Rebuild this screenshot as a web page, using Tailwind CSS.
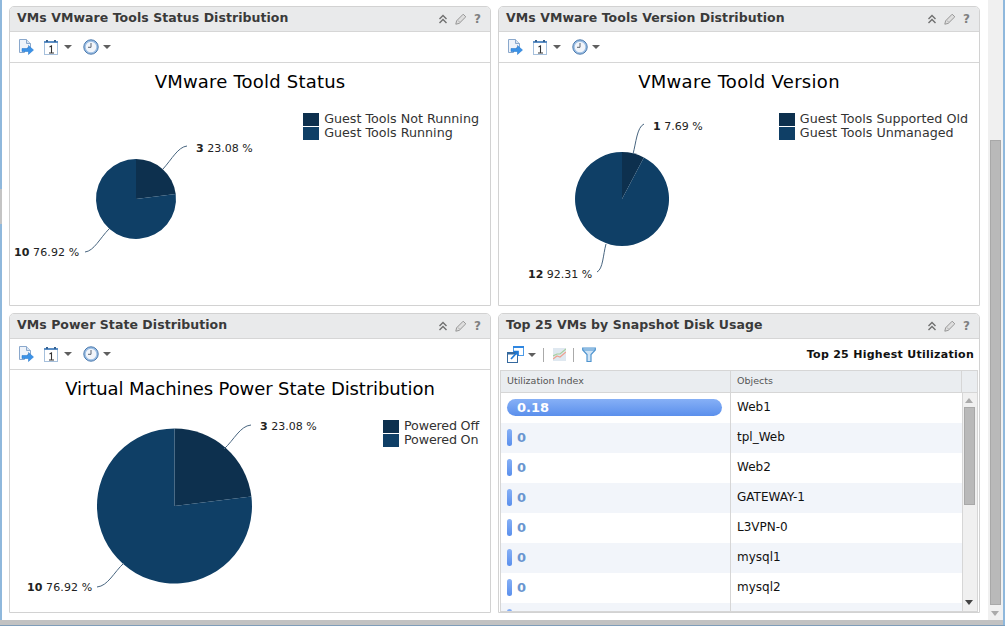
<!doctype html>
<html>
<head>
<meta charset="utf-8">
<title>VM dashboard</title>
<script src="https://cdn.jsdelivr.net/npm/@tailwindcss/browser@4"></script>
</head>
<body class="w-[1005px] h-[626px] overflow-hidden bg-white font-['DejaVu_Sans',sans-serif]">
<!-- shared icons -->
<svg class="hidden">
  <symbol id="i-export" viewBox="0 0 16 16">
    <path d="M1.500.5h7l4 4v4h-3v2h-3v3h-5z" fill="#eef3fa" stroke="#8aa8cc"/>
    <path d="M8.500.5v4h4" fill="#d5e2f0" stroke="#8aa8cc"/>
    <path d="M4 9.500h6.500v-3l5 4.500-5 4.500v-3h-6.500z" fill="#3a92e8" stroke="#1f72c8" stroke-width=".5"/>
  </symbol>
  <symbol id="i-cal" viewBox="0 0 15 15">
    <rect x=".5" y="1.500" width="13" height="13" fill="#fff" stroke="#a6c0dc"/>
    <rect x="0" y="1" width="14" height="2" fill="#5c8fc6"/>
    <rect x="2" y="0" width="2" height="2" fill="#35618f"/>
    <rect x="10" y="0" width="2" height="2" fill="#35618f"/>
    <path d="M5.500 7l2-1v7M5 13h5" fill="none" stroke="#333" stroke-width="1.100"/>
  </symbol>
  <symbol id="i-clock" viewBox="0 0 16 16">
    <circle cx="8" cy="8" r="7.200" fill="#9dbfe4" stroke="#4a79ad" stroke-width="1"/>
    <circle cx="8" cy="8" r="5.300" fill="#f2f5fa"/>
    <path d="M8 4v4.300h-3" fill="none" stroke="#5c6470" stroke-width="1"/>
  </symbol>
  <symbol id="i-caret" viewBox="0 0 8 4"><path d="M0 0h8l-4 4z" fill="#5f5f5f"/></symbol>
  <symbol id="i-up" viewBox="0 0 10 10">
    <path d="M1.500 5l3.500-3.500 3.500 3.500M1.500 9l3.500-3.500 3.500 3.500" fill="none" stroke="#6f6f6f" stroke-width="1.400"/>
  </symbol>
  <symbol id="i-pen" viewBox="0 0 12 12">
    <path d="M.8 11.200l.8-3.400 6.600-6.600 2.600 2.600-6.600 6.600z" fill="#dedede" stroke="#969696"/>
    <path d="M3 7.500l2 2" fill="none" stroke="#adadad"/>
  </symbol>
</svg>

<!-- window edges -->
<div class="absolute left-0 top-0 w-[2px] h-[626px] bg-[#8fb8dc]"></div>
<div class="absolute left-0 top-[189px] w-[2px] h-[35px] bg-[#c4c4c4]"></div>
<div class="absolute right-0 top-0 w-[2px] h-[626px] bg-[#8fb8dc]"></div>
<div class="absolute left-0 top-[620px] w-[1003px] h-[5px] bg-[#c2c2c2]"></div>
<div class="absolute left-0 top-[625px] w-[1005px] h-[1px] bg-[#7f9db9]"></div>

<!-- page scrollbar -->
<div class="absolute left-[988px] top-0 w-[15px] h-[620px] bg-[#f0f0f0]">
  <div class="absolute left-[2px] top-[140px] w-[11px] h-[465px] bg-[#b9b9b9] border border-[#a8a8a8]"></div>
  <div class="absolute left-[3px] top-[611px] w-0 h-0 border-x-[4px] border-x-transparent border-t-[5px] border-t-[#aaa]"></div>
</div>

<main class="grid grid-cols-[482px_482px] grid-rows-[300px_300px] gap-[7px] pl-[9px] pt-[6px]">

  <!-- panel 1 -->
  <section class="flex flex-col border border-[#d2d2d2] rounded-t-[5px] overflow-hidden">
    <header class="h-[25px] shrink-0 flex items-center justify-between pl-[7px] pr-[9px] bg-[#e9eaeb] border-b border-[#d6d6d6]">
      <h2 class="pb-[2px] text-[12.5px] font-bold text-[#3a3a3a] tracking-[0.06px]">VMs VMware Tools Status Distribution</h2>
      <div class="flex items-center gap-[7px]">
        <svg class="w-[10px] h-[10px]"><use href="#i-up"/></svg>
        <svg class="w-[12px] h-[12px]"><use href="#i-pen"/></svg>
        <span class="text-[12px] font-bold text-[#808080] w-[7px] text-center">?</span>
      </div>
    </header>
    <div class="h-[31px] shrink-0 flex items-center pl-[8px] border-b border-[#d6d6d6]">
      <svg class="w-[16px] h-[16px]"><use href="#i-export"/></svg>
      <svg class="w-[15px] h-[15px] ml-[10px]"><use href="#i-cal"/></svg>
      <svg class="w-[8px] h-[4px] ml-[5px]"><use href="#i-caret"/></svg>
      <svg class="w-[16px] h-[16px] ml-[11px]"><use href="#i-clock"/></svg>
      <svg class="w-[8px] h-[4px] ml-[4px]"><use href="#i-caret"/></svg>
    </div>
    <div class="relative flex-1">
      <h3 class="pt-[8px] text-center text-[18px] leading-[22px] text-black tracking-[0.2px]">VMware Toold Status</h3>
      <svg class="absolute left-0 top-0 w-[480px] h-[242px]" viewBox="0 0 480 242">
        <path d="M126 136 L126 96 A40 40 0 0 1 165.700 131 Z" fill="#0d304e"/>
        <path d="M126 136 L165.700 131 A40 40 0 1 1 126 96 Z" fill="#0f3f66"/>
        <path d="M153 106 C162 96 168 84 177 83" fill="none" stroke="#48657f"/>
        <path d="M99 166 C90 175 84 188 75 189" fill="none" stroke="#48657f"/>
      </svg>
      <p class="absolute left-[186px] top-[79px] text-[11px] leading-[14px] text-[#222]"><b>3</b> 23.08 %</p>
      <p class="absolute left-[4px] top-[183px] text-[11px] leading-[14px] text-[#222] tracking-[0.1px]"><b>10</b> 76.92 %</p>
      <ul class="absolute right-[11px] top-[49px] text-[12.7px] leading-[14px] text-[#333]">
        <li class="flex items-center gap-[5px]"><span class="w-[16px] h-[13px] bg-[#0d304e]"></span>Guest Tools Not Running</li>
        <li class="flex items-center gap-[5px]"><span class="w-[16px] h-[13px] bg-[#0f3f66]"></span>Guest Tools Running</li>
      </ul>
    </div>
  </section>

  <!-- panel 2 -->
  <section class="flex flex-col border border-[#d2d2d2] rounded-t-[5px] overflow-hidden">
    <header class="h-[25px] shrink-0 flex items-center justify-between pl-[7px] pr-[9px] bg-[#e9eaeb] border-b border-[#d6d6d6]">
      <h2 class="pb-[2px] text-[12.5px] font-bold text-[#3a3a3a] tracking-[0.06px]">VMs VMware Tools Version Distribution</h2>
      <div class="flex items-center gap-[7px]">
        <svg class="w-[10px] h-[10px]"><use href="#i-up"/></svg>
        <svg class="w-[12px] h-[12px]"><use href="#i-pen"/></svg>
        <span class="text-[12px] font-bold text-[#808080] w-[7px] text-center">?</span>
      </div>
    </header>
    <div class="h-[31px] shrink-0 flex items-center pl-[8px] border-b border-[#d6d6d6]">
      <svg class="w-[16px] h-[16px]"><use href="#i-export"/></svg>
      <svg class="w-[15px] h-[15px] ml-[10px]"><use href="#i-cal"/></svg>
      <svg class="w-[8px] h-[4px] ml-[5px]"><use href="#i-caret"/></svg>
      <svg class="w-[16px] h-[16px] ml-[11px]"><use href="#i-clock"/></svg>
      <svg class="w-[8px] h-[4px] ml-[4px]"><use href="#i-caret"/></svg>
    </div>
    <div class="relative flex-1">
      <h3 class="pt-[8px] text-center text-[18px] leading-[22px] text-black tracking-[0.3px]">VMware Toold Version</h3>
      <svg class="absolute left-0 top-0 w-[480px] h-[242px]" viewBox="0 0 480 242">
        <path d="M123 136 L123 89 A47 47 0 0 1 144.900 94.400 Z" fill="#0d304e"/>
        <path d="M123 136 L144.900 94.400 A47 47 0 1 1 123 89 Z" fill="#0f3f66"/>
        <path d="M134 91 C137 80 138 64 145 61" fill="none" stroke="#48657f"/>
        <path d="M107 181 C104 192 104 206 98 209" fill="none" stroke="#48657f"/>
      </svg>
      <p class="absolute left-[154px] top-[57px] text-[11px] leading-[14px] text-[#222]"><b>1</b> 7.69 %</p>
      <p class="absolute left-[29px] top-[205px] text-[11px] leading-[14px] text-[#222]"><b>12</b> 92.31 %</p>
      <ul class="absolute right-[11px] top-[49px] text-[12.7px] leading-[14px] text-[#333]">
        <li class="flex items-center gap-[5px]"><span class="w-[16px] h-[13px] bg-[#0d304e]"></span>Guest Tools Supported Old</li>
        <li class="flex items-center gap-[5px]"><span class="w-[16px] h-[13px] bg-[#0f3f66]"></span>Guest Tools Unmanaged</li>
      </ul>
    </div>
  </section>

  <!-- panel 3 -->
  <section class="flex flex-col border border-[#d2d2d2] rounded-t-[5px] overflow-hidden">
    <header class="h-[25px] shrink-0 flex items-center justify-between pl-[7px] pr-[9px] bg-[#e9eaeb] border-b border-[#d6d6d6]">
      <h2 class="pb-[2px] text-[12.5px] font-bold text-[#3a3a3a] tracking-[0.06px]">VMs Power State Distribution</h2>
      <div class="flex items-center gap-[7px]">
        <svg class="w-[10px] h-[10px]"><use href="#i-up"/></svg>
        <svg class="w-[12px] h-[12px]"><use href="#i-pen"/></svg>
        <span class="text-[12px] font-bold text-[#808080] w-[7px] text-center">?</span>
      </div>
    </header>
    <div class="h-[31px] shrink-0 flex items-center pl-[8px] border-b border-[#d6d6d6]">
      <svg class="w-[16px] h-[16px]"><use href="#i-export"/></svg>
      <svg class="w-[15px] h-[15px] ml-[10px]"><use href="#i-cal"/></svg>
      <svg class="w-[8px] h-[4px] ml-[5px]"><use href="#i-caret"/></svg>
      <svg class="w-[16px] h-[16px] ml-[11px]"><use href="#i-clock"/></svg>
      <svg class="w-[8px] h-[4px] ml-[4px]"><use href="#i-caret"/></svg>
    </div>
    <div class="relative flex-1">
      <h3 class="pt-[8px] text-center text-[18px] leading-[22px] text-black tracking-[-0.1px]">Virtual Machines Power State Distribution</h3>
      <svg class="absolute left-0 top-0 w-[480px] h-[242px]" viewBox="0 0 480 242">
        <path d="M164.500 136 L164.500 58.500 A77.500 77.500 0 0 1 241.400 126.500 Z" fill="#0d304e"/>
        <path d="M164.500 136 L241.400 126.500 A77.500 77.500 0 1 1 164.500 58.500 Z" fill="#0f3f66"/>
        <path d="M214 79 C224 70 230 56 241 55" fill="none" stroke="#48657f"/>
        <path d="M114 193 C104 202 98 216 87 217" fill="none" stroke="#48657f"/>
      </svg>
      <p class="absolute left-[250px] top-[50px] text-[11px] leading-[14px] text-[#222]"><b>3</b> 23.08 %</p>
      <p class="absolute left-[17px] top-[211px] text-[11px] leading-[14px] text-[#222] tracking-[0.1px]"><b>10</b> 76.92 %</p>
      <ul class="absolute right-[11px] top-[49px] text-[12.7px] leading-[14px] text-[#333] tracking-[-0.18px]">
        <li class="flex items-center gap-[5px]"><span class="w-[16px] h-[13px] bg-[#0d304e]"></span>Powered Off</li>
        <li class="flex items-center gap-[5px]"><span class="w-[16px] h-[13px] bg-[#0f3f66]"></span>Powered On</li>
      </ul>
    </div>
  </section>

  <!-- panel 4 -->
  <section class="flex flex-col border border-[#d2d2d2] rounded-t-[5px] overflow-hidden">
    <header class="h-[25px] shrink-0 flex items-center justify-between pl-[7px] pr-[9px] bg-[#e9eaeb] border-b border-[#d6d6d6]">
      <h2 class="pb-[2px] text-[12.5px] font-bold text-[#3a3a3a] tracking-[0.06px]">Top 25 VMs by Snapshot Disk Usage</h2>
      <div class="flex items-center gap-[7px]">
        <svg class="w-[10px] h-[10px]"><use href="#i-up"/></svg>
        <svg class="w-[12px] h-[12px]"><use href="#i-pen"/></svg>
        <span class="text-[12px] font-bold text-[#808080] w-[7px] text-center">?</span>
      </div>
    </header>
    <div class="h-[31px] shrink-0 flex items-center pl-[8px] pr-[5px]">
      <svg class="w-[17px] h-[17px]" viewBox="0 0 17 17">
        <rect x="6.500" y=".5" width="10" height="9" fill="#fff" stroke="#4d9be8"/>
        <rect x="6" y="0" width="11" height="2" fill="#2f86e0"/>
        <rect x=".5" y="6.500" width="10" height="10" fill="#fff" stroke="#35699e"/>
        <rect x="0" y="6" width="11" height="2.500" fill="#35699e"/>
        <path d="M4 13l6-6.500M6.500 5.500H11V10" fill="none" stroke="#1f7ad8" stroke-width="1.700"/>
      </svg>
      <svg class="w-[8px] h-[4px] ml-[4px]"><use href="#i-caret"/></svg>
      <span class="w-px h-[14px] bg-[#aaa] ml-[7px]"></span>
      <svg class="w-[13px] h-[13px] ml-[9px]" viewBox="0 0 13 13">
        <rect width="13" height="13" fill="#dfe8f0"/>
        <path d="M0 11l4-3 3 1 6-5" fill="none" stroke="#eda18f" stroke-width="1.200"/>
        <path d="M0 8l4-2 3 0 6-5" fill="none" stroke="#a6cf9e" stroke-width="1.200"/>
      </svg>
      <span class="w-px h-[14px] bg-[#aaa] ml-[7px]"></span>
      <svg class="w-[14px] h-[15px] ml-[8px]" viewBox="0 0 14 15">
        <path d="M.7 1h12.600v2l-4.300 4.500v7h-4v-7l-4.300-4.500z" fill="#cfe4f6" stroke="#4f94cf" stroke-width="1.200"/>
        <path d="M1 3h12" stroke="#4f94cf"/>
      </svg>
      <span class="ml-auto pt-[2px] text-[11px] font-bold text-[#111] tracking-[0.28px]">Top 25 Highest Utilization</span>
    </div>

    <div class="mx-[1px] w-[478px] h-[242px] border border-[#d6d6d6] flex flex-col overflow-hidden">
      <div class="h-[22px] shrink-0 flex bg-[#eaedf0] border-b border-[#d6d6d6] text-[9.5px] text-[#555]">
        <div class="w-[230px] pl-[6px] flex items-center border-r border-[#d6d6d6]">Utilization Index</div>
        <div class="w-[231px] pl-[6px] flex items-center border-r border-[#d6d6d6]">Objects</div>
      </div>
      <div class="flex flex-1 min-h-0">
        <div class="w-[461px] overflow-hidden text-[12px] text-[#111]">
          <div class="h-[30px] flex bg-white">
            <div class="w-[230px] pl-[6px] pr-[8px] pt-[6px] border-r border-[#d6d6d6]"><div class="w-full h-[17px] rounded-full bg-gradient-to-b from-[#86b0f6] to-[#5b8fec] pl-[10px] text-white font-bold text-[13px] leading-[17px]">0.18</div></div>
            <div class="pl-[6px] pb-[2px] flex items-center">Web1</div>
          </div>
          <div class="h-[30px] flex bg-[#f2f5fa]">
            <div class="w-[230px] pl-[6px] pt-[6px] flex items-start gap-[5px] border-r border-[#d6d6d6]"><span class="w-[5px] h-[17px] rounded-full bg-gradient-to-b from-[#86b0f6] to-[#5b8fec]"></span><span class="font-bold text-[13px] leading-[17px] text-[#6a96d0]">0</span></div>
            <div class="pl-[6px] pb-[2px] flex items-center">tpl_Web</div>
          </div>
          <div class="h-[30px] flex bg-white">
            <div class="w-[230px] pl-[6px] pt-[6px] flex items-start gap-[5px] border-r border-[#d6d6d6]"><span class="w-[5px] h-[17px] rounded-full bg-gradient-to-b from-[#86b0f6] to-[#5b8fec]"></span><span class="font-bold text-[13px] leading-[17px] text-[#6a96d0]">0</span></div>
            <div class="pl-[6px] pb-[2px] flex items-center">Web2</div>
          </div>
          <div class="h-[30px] flex bg-[#f2f5fa]">
            <div class="w-[230px] pl-[6px] pt-[6px] flex items-start gap-[5px] border-r border-[#d6d6d6]"><span class="w-[5px] h-[17px] rounded-full bg-gradient-to-b from-[#86b0f6] to-[#5b8fec]"></span><span class="font-bold text-[13px] leading-[17px] text-[#6a96d0]">0</span></div>
            <div class="pl-[6px] pb-[2px] flex items-center">GATEWAY-1</div>
          </div>
          <div class="h-[30px] flex bg-white">
            <div class="w-[230px] pl-[6px] pt-[6px] flex items-start gap-[5px] border-r border-[#d6d6d6]"><span class="w-[5px] h-[17px] rounded-full bg-gradient-to-b from-[#86b0f6] to-[#5b8fec]"></span><span class="font-bold text-[13px] leading-[17px] text-[#6a96d0]">0</span></div>
            <div class="pl-[6px] pb-[2px] flex items-center">L3VPN-0</div>
          </div>
          <div class="h-[30px] flex bg-[#f2f5fa]">
            <div class="w-[230px] pl-[6px] pt-[6px] flex items-start gap-[5px] border-r border-[#d6d6d6]"><span class="w-[5px] h-[17px] rounded-full bg-gradient-to-b from-[#86b0f6] to-[#5b8fec]"></span><span class="font-bold text-[13px] leading-[17px] text-[#6a96d0]">0</span></div>
            <div class="pl-[6px] pb-[2px] flex items-center">mysql1</div>
          </div>
          <div class="h-[30px] flex bg-white">
            <div class="w-[230px] pl-[6px] pt-[6px] flex items-start gap-[5px] border-r border-[#d6d6d6]"><span class="w-[5px] h-[17px] rounded-full bg-gradient-to-b from-[#86b0f6] to-[#5b8fec]"></span><span class="font-bold text-[13px] leading-[17px] text-[#6a96d0]">0</span></div>
            <div class="pl-[6px] pb-[2px] flex items-center">mysql2</div>
          </div>
          <div class="h-[30px] flex bg-[#f2f5fa]">
            <div class="w-[230px] pl-[6px] pt-[6px] flex items-start gap-[5px] border-r border-[#d6d6d6]"><span class="w-[5px] h-[17px] rounded-full bg-gradient-to-b from-[#86b0f6] to-[#5b8fec]"></span></div>
            <div class="pl-[6px]"></div>
          </div>
        </div>
        <!-- grid scrollbar -->
        <div class="relative flex-1 bg-[#f0f0f0] border-l border-[#d6d6d6]">
          <div class="absolute left-[2px] top-[5px] w-0 h-0 border-x-[4px] border-x-transparent border-b-[5px] border-b-[#aaa]"></div>
          <div class="absolute left-[1px] top-[14px] w-[11px] h-[98px] bg-[#b9b9b9] border border-[#a8a8a8]"></div>
          <div class="absolute left-[2px] top-[207px] w-0 h-0 border-x-[4px] border-x-transparent border-t-[5px] border-t-[#444]"></div>
        </div>
      </div>
    </div>
  </section>
</main>
</body>
</html>
